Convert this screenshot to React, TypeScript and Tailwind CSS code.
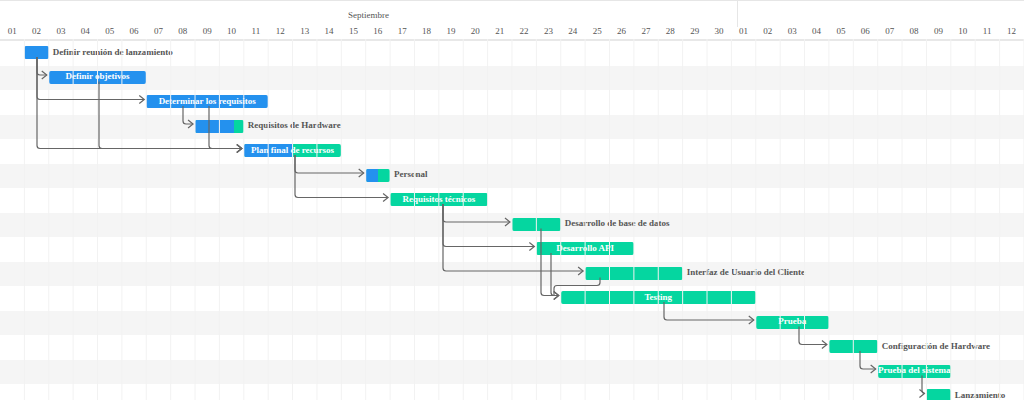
import React from "react";

const W = 24.38;
const RH = 24.5;
const TOP = 39;

type Task = { name: string; col: number; len: number; blue: number; inside: boolean };

// blue = how many columns of the bar are blue (the rest is green)
const tasks: Task[] = [
  { name: "Definir reunión de lanzamiento", col: 1, len: 1, blue: 1, inside: false },
  { name: "Definir objetivos", col: 2, len: 4, blue: 4, inside: true },
  { name: "Determinar los requisitos", col: 6, len: 5, blue: 5, inside: true },
  { name: "Requisitos de Hardware", col: 8, len: 2, blue: 1.6, inside: false },
  { name: "Plan final de recursos", col: 10, len: 4, blue: 2, inside: true },
  { name: "Personal", col: 15, len: 1, blue: 0.5, inside: false },
  { name: "Requisitos técnicos", col: 16, len: 4, blue: 0, inside: true },
  { name: "Desarrollo de base de datos", col: 21, len: 2, blue: 0, inside: false },
  { name: "Desarrollo API", col: 22, len: 4, blue: 0, inside: true },
  { name: "Interfaz de Usuario del Cliente", col: 24, len: 4, blue: 0, inside: false },
  { name: "Testing", col: 23, len: 8, blue: 0, inside: true },
  { name: "Prueba", col: 31, len: 3, blue: 0, inside: true },
  { name: "Configuración de Hardware", col: 34, len: 2, blue: 0, inside: false },
  { name: "Prueba del sistema", col: 36, len: 3, blue: 0, inside: true },
  { name: "Lanzamiento", col: 38, len: 1, blue: 0, inside: false },
];

const days = [
  ...Array.from({ length: 30 }, (_, i) => String(i + 1).padStart(2, "0")),
  ...Array.from({ length: 12 }, (_, i) => String(i + 1).padStart(2, "0")),
];

const cy = (r: number) => TOP + RH * r + 11.5;
const bottom = (r: number) => cy(r) + 6.5;

// [fromX, fromRow, toRow]
const links: [number, number, number][] = [
  [37, 0, 1], [37, 0, 2], [37, 0, 4], [99, 1, 4], [183, 2, 3], [209, 2, 4],
  [295, 4, 5], [295, 4, 6], [443, 6, 7], [443, 6, 8], [443, 6, 9],
  [541, 7, 10], [551, 8, 10], [664, 10, 11], [799, 11, 12], [860, 12, 13], [922, 13, 14],
];

function Arrow({ x, y }: { x: number; y: number }) {
  return <path d={`M${x - 5} ${y - 4} L${x} ${y} L${x - 5} ${y + 4}`} fill="none" stroke="#666" strokeWidth="1.2" />;
}

export default function App() {
  return (
    <div className="relative w-[1024px] h-[400px] overflow-hidden bg-white text-[#555]" style={{ fontFamily: '"Liberation Serif", serif' }}>
      <div className="border-t border-[#e6e6e6] h-[27px] flex">
        <div className="w-[738px] flex justify-center pt-[8px] text-[9px] border-r border-[#e6e6e6]">Septiembre</div>
        <div className="flex-1" />
      </div>
      <div className="flex h-[12px] border-b-2 border-[#e8e8e8] box-content">
        {days.map((d, i) => (
          <div key={i} className="w-[24.38px] shrink-0 text-center text-[9px] leading-[9px]">{d}</div>
        ))}
      </div>
      <div className="relative">
        {tasks.map((t, r) => {
          const left = t.col * W;
          const width = t.len * W;
          return (
            <div key={r} className={`relative h-[24.5px] ${r % 2 ? "bg-[#f5f5f5]" : "bg-white"}`}>
              <div
                className="absolute top-[5px] h-[13px] rounded-[2px] overflow-hidden flex bg-[#05d6a0]"
                style={{ left, width }}
              >
                <div className="h-full bg-[#2491ee]" style={{ width: t.blue * W }} />
                {t.inside && (
                  <span className="absolute inset-0 flex items-center justify-center text-white text-[9px] font-bold">{t.name}</span>
                )}
              </div>
              {!t.inside && (
                <span className="absolute top-[5px] h-[13px] flex items-center text-[9px] font-bold text-[#555] whitespace-nowrap" style={{ left: left + width + 4 }}>
                  {t.name}
                </span>
              )}
            </div>
          );
        })}
      </div>
      <svg className="absolute inset-0 pointer-events-none" width="1024" height="400">
        {days.map((_, i) => (
          <line key={i} x1={(i + 1) * W} y1={TOP} x2={(i + 1) * W} y2={400} stroke="#f2f2f2" strokeWidth="1" />
        ))}
        {links.map(([x, fr, tr], i) => {
          const tx = tasks[tr].col * W - 2;
          const y = cy(tr);
          return (
            <g key={i}>
              <path d={`M${x} ${bottom(fr)} L${x} ${y - 3} Q${x} ${y} ${x + 3} ${y} L${tx} ${y}`} fill="none" stroke="#666" strokeWidth="1.2" />
              <Arrow x={tx} y={y} />
            </g>
          );
        })}
        <path d={`M600 ${bottom(9)} L600 ${bottom(9) + 5} Q600 ${bottom(9) + 8} 597 ${bottom(9) + 8} L557 ${bottom(9) + 8} Q554 ${bottom(9) + 8} 554 ${bottom(9) + 11} L554 ${cy(10)}`} fill="none" stroke="#666" strokeWidth="1.2" />
      </svg>
    </div>
  );
}
